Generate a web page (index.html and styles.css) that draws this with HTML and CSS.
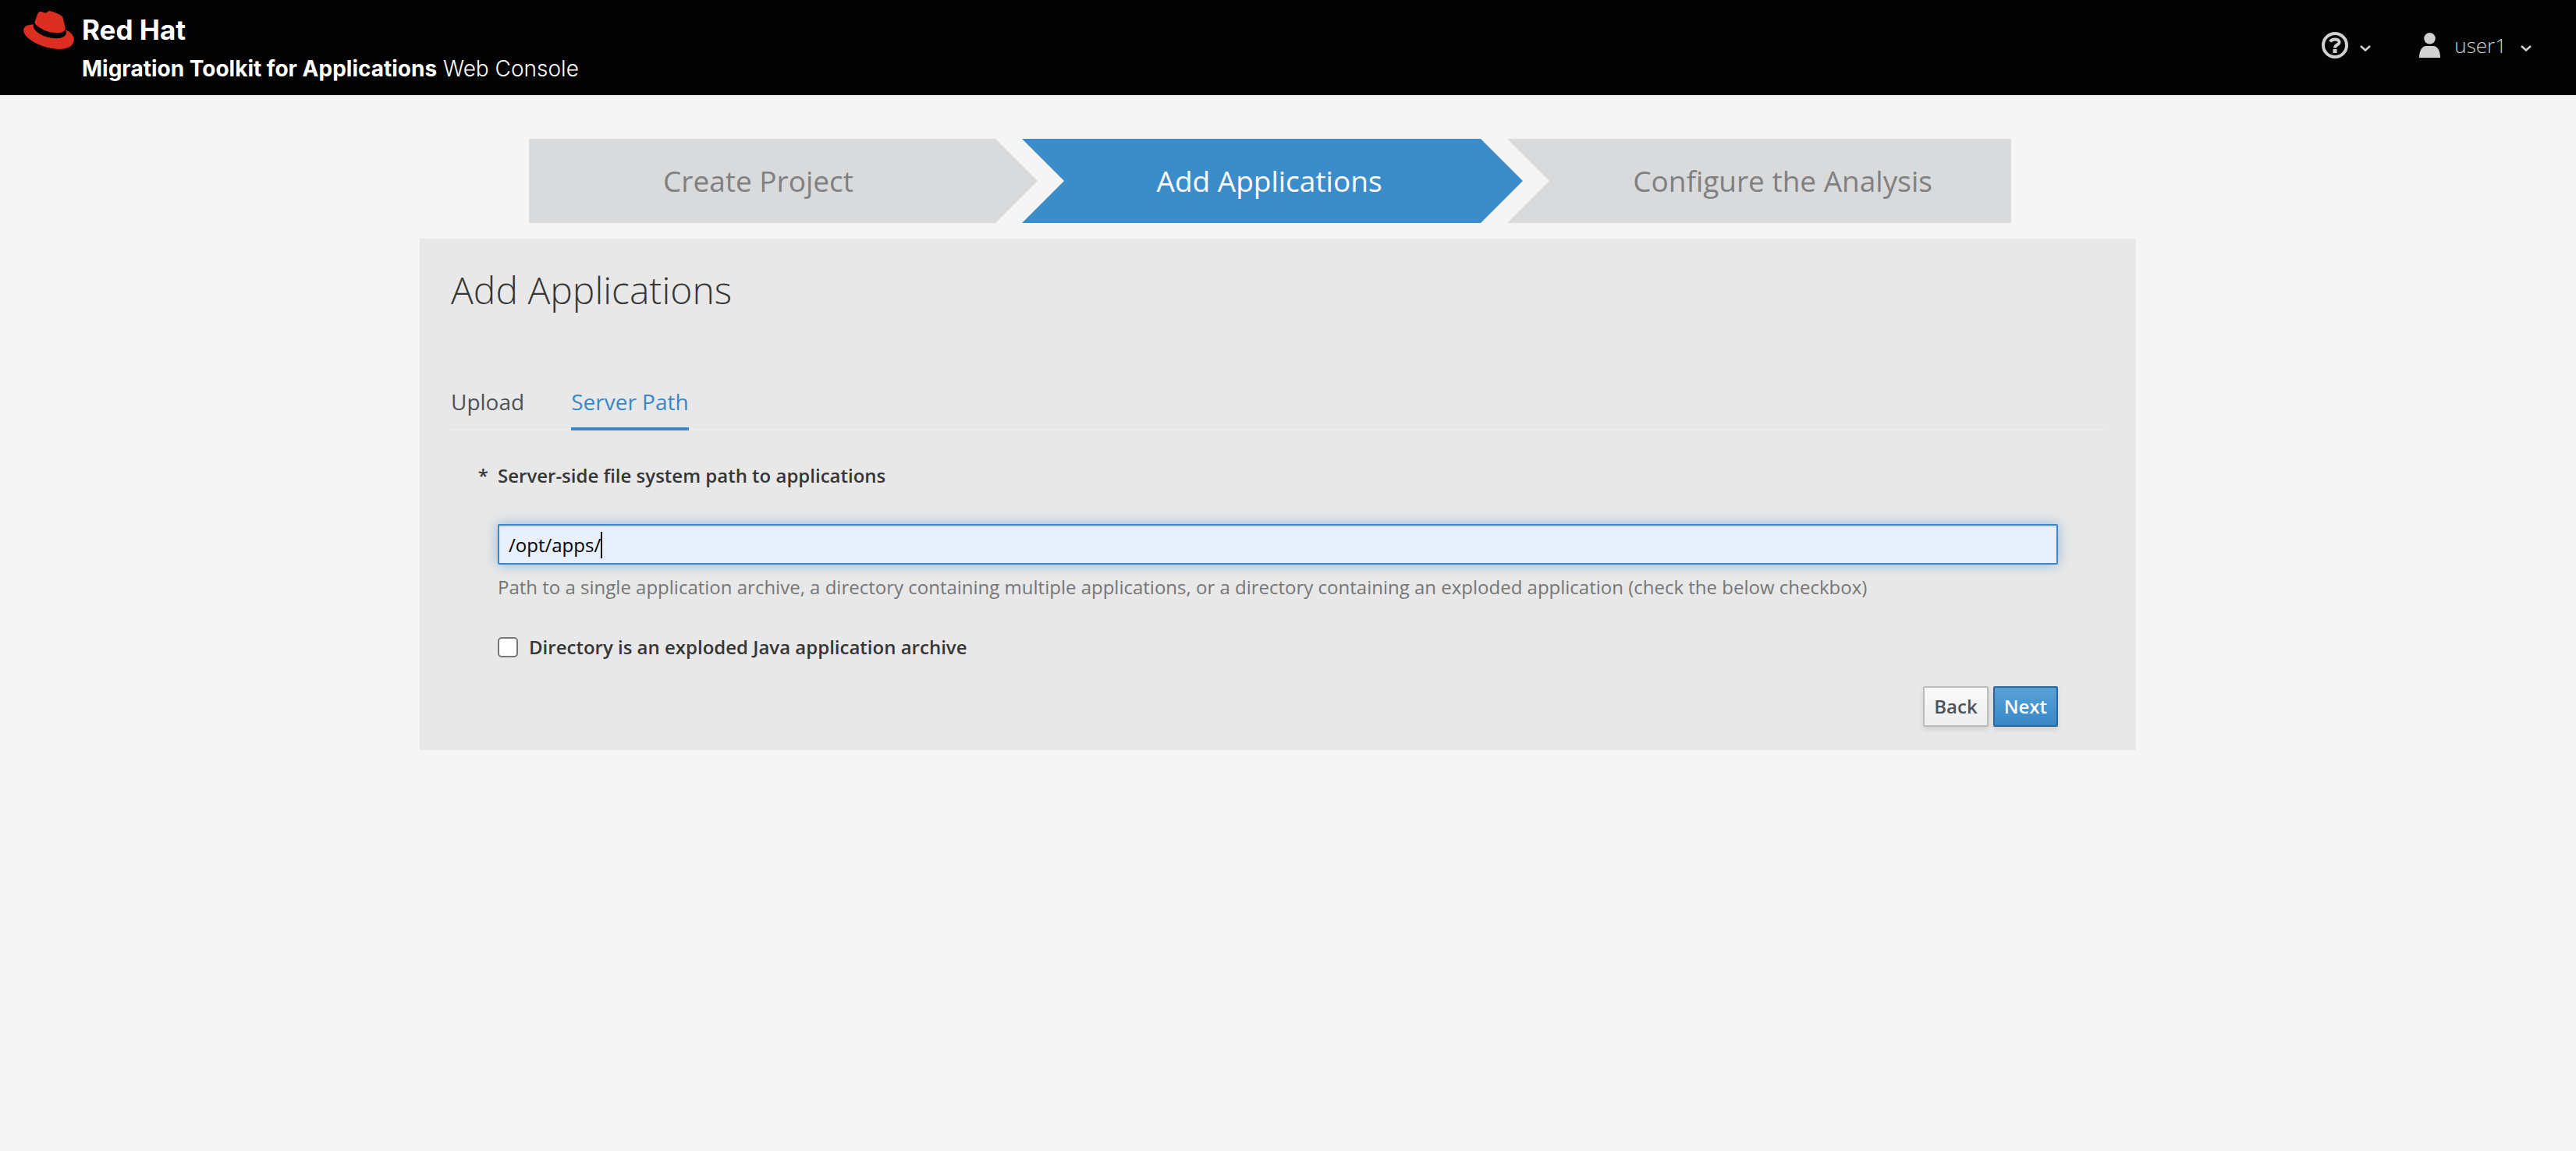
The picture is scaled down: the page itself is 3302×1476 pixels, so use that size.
FILE: index.html
```html
<!DOCTYPE html>
<html lang="en">
<head>
<meta charset="utf-8">
<meta name="viewport" content="width=device-width, initial-scale=1">
<title>Migration Toolkit for Applications Web Console</title>
<link rel="stylesheet" href="styles.css">
</head>
<body>
<header class="masthead">
  <a class="brand" href="#">
    <svg class="brand-hat" viewBox="0 62 512 388" aria-hidden="true"><path d="M341.52 285.56c33.65 0 82.34-6.94 82.34-47 .22-6.74.86-1.82-20.88-96.24-4.62-19.15-8.68-27.84-42.31-44.65-26.09-13.34-82.92-35.37-99.73-35.37-15.66 0-20.2 20.17-38.87 20.17-18 0-31.31-15.06-48.12-15.06-16.14 0-26.66 11-34.78 33.62-27.5 77.55-26.28 74.27-26.12 78.27 0 24.8 97.64 106.11 228.47 106.11M429 254.84c4.65 22 4.65 24.35 4.65 27.25 0 37.66-42.33 58.56-98 58.56-125.74.08-235.91-73.65-235.91-122.33a49.55 49.55 0 0 1 4.06-19.72C58.56 200.86 0 208.93 0 260.63c0 84.67 200.63 189 359.49 189 121.79 0 152.51-55.08 152.51-98.58 0-34.21-29.59-73.05-82.93-96.24"/></svg>
    <span class="brand-text">
      <span class="brand-company">Red Hat</span>
      <span class="brand-product"><b>Migration Toolkit for Applications</b> Web Console</span>
    </span>
  </a>
  <nav class="utility" aria-label="Utilities">
    <button class="utility-item help" type="button" aria-label="Help">
      <svg class="icon-help" viewBox="0 0 34 34" aria-hidden="true">
        <circle cx="17" cy="17" r="15"/>
        <path d="M11 12.500C12.200 10.300 14.500 9.500 17 9.500C20.300 9.500 22.600 10.900 22.600 13.200C22.600 16.500 17 16 17 20.500"/>
        <rect x="14.500" y="22" width="5" height="5"/>
      </svg>
      <svg class="chevron" viewBox="0 0 14 8" aria-hidden="true"><path d="M1 1L7 6.500L13 1"/></svg>
    </button>
    <button class="utility-item user" type="button">
      <svg class="icon-user" viewBox="0 0 27 32" aria-hidden="true"><circle cx="13.500" cy="7.300" r="7.300"/><path d="M0 32C0 24 3 17 9 17H18C24 17 27 24 27 32Z"/></svg>
      <span class="user-name">user1</span>
      <svg class="chevron" viewBox="0 0 14 8" aria-hidden="true"><path d="M1 1L7 6.500L13 1"/></svg>
    </button>
  </nav>
</header>

<main class="wizard">
  <ol class="steps">
    <li class="step step-first"><span class="step-name">Create Project</span></li>
    <li class="step step-active" aria-current="step"><span class="step-name">Add Applications</span></li>
    <li class="step step-last"><span class="step-name">Configure the Analysis</span></li>
  </ol>

  <section class="panel">
    <h1 class="panel-title">Add Applications</h1>
    <nav class="tabs" aria-label="Application source">
      <a class="tab" href="#">Upload</a>
      <a class="tab tab-active" href="#" aria-current="page">Server Path</a>
    </nav>
    <form class="form">
      <label class="label label-required" for="path">Server-side file system path to applications</label>
      <div class="field">
        <input class="input" id="path" type="text" value="/opt/apps/" aria-describedby="path-help">
        <span class="caret"></span>
      </div>
      <p class="help-text" id="path-help">Path to a single application archive, a directory containing multiple applications, or a directory containing an exploded application (check the below checkbox)</p>
      <div class="check-row">
        <input class="checkbox" id="exploded" type="checkbox">
        <label class="label" for="exploded">Directory is an exploded Java application archive</label>
      </div>
      <div class="actions">
        <button class="button" type="button">Back</button>
        <button class="button button-primary" type="button">Next</button>
      </div>
    </form>
  </section>
</main>
</body>
</html>
```
FILE: styles.css
```css
* {
  box-sizing: border-box;
}

body {
  margin: 0;
  background: #f5f5f5;
  color: #363636;
  font-family: "Open Sans", sans-serif;
  font-size: 24px;
  line-height: 40px;
}

/* Masthead */
.masthead {
  display: flex;
  justify-content: space-between;
  align-items: flex-start;
  min-height: 122px;
  padding: 0 57px 0 30px;
  background: #030303;
}

.brand {
  display: flex;
  gap: 10px;
  padding-top: 14px;
  color: #fff;
  font-family: Inter, sans-serif;
  line-height: 48px;
  text-decoration: none;
}

.brand-hat {
  width: 65px;
  height: 49px;
  fill: #dc2f22;
}

.brand-text {
  display: flex;
  flex-direction: column;
  gap: 2px;
}

.brand-company {
  font-size: 35px;
  font-weight: 700;
}

.brand-product {
  font-size: 28px;
  font-weight: 300;
}

.brand-product b {
  font-weight: 700;
}

.utility {
  display: flex;
  gap: 62px;
  height: 116px;
}

.utility-item {
  display: flex;
  align-items: center;
  padding: 0;
  border: 0;
  background: none;
  color: #d1d1d1;
  font: 300 26px/40px "Open Sans", sans-serif;
}

.help {
  gap: 15px;
}

.user {
  gap: 18px;
}

.icon-help {
  width: 34px;
  height: 34px;
  fill: none;
  stroke: currentColor;
  stroke-width: 4;
}

.icon-help rect {
  fill: currentColor;
  stroke: none;
}

.icon-user {
  width: 27px;
  height: 32px;
  fill: currentColor;
}

.chevron {
  width: 14px;
  height: 8px;
  margin-top: 8px;
  fill: none;
  stroke: currentColor;
  stroke-width: 2.5;
}

/* Wizard */
.wizard {
  padding: 56px 564px 56px 538px;
}

.steps {
  display: flex;
  margin: 0 160px 20px 140px;
  padding: 0;
  list-style: none;
}

.step {
  flex: 646 1 0;
  background: #d9dadc;
  color: #808080;
  font-size: 37px;
  line-height: 108px;
  text-align: center;
  white-space: nowrap;
}

.step + .step {
  margin-left: -20px;
}

.step-name {
  display: block;
  padding-right: 8px;
}

.step-first {
  flex-grow: 652;
  clip-path: polygon(0 0, calc(100% - 54px) 0, 100% 50%, calc(100% - 54px) 100%, 0 100%);
}

.step-first .step-name {
  padding-right: 64px;
}

.step-active {
  flex-grow: 642;
  background: #3d8cca;
  color: #fff;
  clip-path: polygon(0 0, calc(100% - 54px) 0, 100% 50%, calc(100% - 54px) 100%, 0 100%, 54px 50%);
}

.step-last {
  clip-path: polygon(0 0, 100% 0, 100% 100%, 0 100%, 54px 50%);
}

.step-last .step-name {
  padding: 0 0 0 60px;
}

.panel {
  padding: 40px 40px 30px;
  background: #e8e8e8;
}

.panel-title {
  margin: 0 0 94px;
  font-size: 48px;
  font-weight: 300;
  line-height: 52px;
}

.tabs {
  display: flex;
  gap: 60px;
  box-shadow: inset 0 -2px #ededed;
}

.tab {
  padding-bottom: 10px;
  border-bottom: 4px solid transparent;
  color: #4d5258;
  font-size: 28px;
  line-height: 46px;
  text-decoration: none;
}

.tab-active {
  border-color: #3987c8;
  color: #3987c8;
}

/* Form */
.form {
  padding: 38px 60px 0;
}

.label {
  font-weight: 600;
}

.label-required {
  display: block;
  position: relative;
}

.label-required::before {
  content: "*";
  position: absolute;
  right: 100%;
  padding-right: 12px;
}

.field {
  position: relative;
  margin-top: 42px;
}

.input {
  display: block;
  width: 100%;
  height: 52px;
  padding: 0 12px;
  border: 2px solid #3987c8;
  border-radius: 2px;
  outline: 0;
  background: #e8effd;
  box-shadow: inset 0 2px 2px rgba(3, 3, 3, 0.08), 0 0 16px rgba(57, 135, 200, 0.5);
  color: #000;
  font: inherit;
}

.caret {
  position: absolute;
  top: 10px;
  left: 132px;
  width: 2px;
  height: 34px;
  background: #000;
}

.help-text {
  margin: 8px 0 36px;
  color: #767676;
  line-height: 42px;
}

.check-row {
  display: flex;
  align-items: center;
  gap: 14px;
}

.checkbox {
  appearance: none;
  width: 26px;
  height: 26px;
  margin: 0;
  border: 2px solid #767676;
  border-radius: 5px;
  background: #fff;
}

.actions {
  display: flex;
  justify-content: flex-end;
  gap: 6px;
  margin-top: 30px;
}

.button {
  height: 52px;
  padding: 0 12px;
  border: 2px solid #bbb;
  border-radius: 2px;
  background: linear-gradient(#fafafa, #ededed);
  box-shadow: 0 4px 6px rgba(3, 3, 3, 0.1);
  color: #4d5258;
  font: 600 24px/40px "Open Sans", sans-serif;
}

.button-primary {
  border-color: #2b669a;
  background: linear-gradient(#57a2d7, #3987c8);
  color: #fff;
}
```
